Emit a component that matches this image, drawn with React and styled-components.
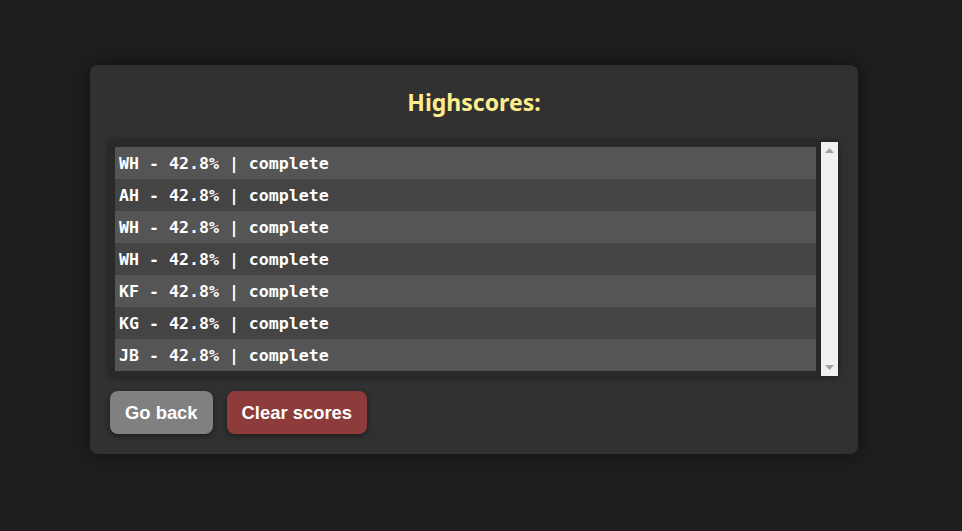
import React from 'react';
import styled, { createGlobalStyle } from 'styled-components';

const GlobalStyle = createGlobalStyle`
  html, body {
    margin: 0;
    padding: 0;
    background: #1f1f1f;
  }
  body {
    font-family: "Liberation Sans", Arial, sans-serif;
  }
`;

const Page = styled.div`
  width: 962px;
  height: 531px;
  padding: 65px 0 0 90px;
  box-sizing: border-box;
  display: flex;
  align-items: flex-start;
`;

const Card = styled.div`
  width: 768px;
  height: 389px;
  box-sizing: border-box;
  padding: 20px 20px 0 20px;
  background: #313131;
  border-radius: 8px;
  box-shadow: 0 0 24px rgba(0, 0, 0, 0.55);
  display: flex;
  flex-direction: column;
`;

const Title = styled.h2`
  margin: 0 0 23px 0;
  height: 34px;
  line-height: 34px;
  text-align: center;
  font-family: "Comic Sans MS", "Noto Sans", sans-serif;
  font-size: 23px;
  font-weight: 700;
  color: #ffee8c;
`;

const ListBox = styled.div`
  display: flex;
  height: 234px;
  background: #292929;
  padding-left: 5px;
  box-shadow: 0 0 8px rgba(0, 0, 0, 0.45);
`;

const Rows = styled.ul`
  list-style: none;
  margin: 5px 5px 5px 0;
  padding: 0;
  flex: 1;
`;

const Row = styled.li`
  height: 32px;
  box-sizing: border-box;
  padding: 2px 0 0 4px;
  line-height: 30px;
  background: ${p => (p.$odd ? '#444444' : '#555555')};
  color: #ffffff;
  font-family: "DejaVu Sans Mono", "Liberation Mono", monospace;
  font-weight: 700;
  font-size: 16.6px;
  white-space: pre;
`;

const Scrollbar = styled.div`
  width: 17px;
  background: #f1f1f1;
  display: flex;
  flex-direction: column;
  justify-content: space-between;
  align-items: center;
  padding: 6px 0;
  box-sizing: border-box;
`;

const Buttons = styled.div`
  display: flex;
  gap: 14px;
  margin-top: 15px;
`;

const Button = styled.button`
  height: 43px;
  padding: 1px 15px 0 15px;
  border: none;
  border-radius: 8px;
  background: ${p => (p.$danger ? '#8d3b3b' : '#808080')};
  color: #ffffff;
  font-family: "Liberation Sans", Arial, sans-serif;
  font-weight: 700;
  font-size: 18.4px;
  box-shadow: 0 2px 6px rgba(0, 0, 0, 0.45);
  cursor: pointer;
`;

const Arrow = ({ down }) => (
  <svg width="9" height="5" viewBox="0 0 9 5">
    <path d={down ? 'M0 0 H9 L4.5 5 Z' : 'M0 5 H9 L4.5 0 Z'} fill="#a3a3a3" />
  </svg>
);

const scores = [
  { name: 'WH', pct: '42.8%', status: 'complete' },
  { name: 'AH', pct: '42.8%', status: 'complete' },
  { name: 'WH', pct: '42.8%', status: 'complete' },
  { name: 'WH', pct: '42.8%', status: 'complete' },
  { name: 'KF', pct: '42.8%', status: 'complete' },
  { name: 'KG', pct: '42.8%', status: 'complete' },
  { name: 'JB', pct: '42.8%', status: 'complete' },
];

const App = () => {
  return (
    <>
      <GlobalStyle />
      <Page>
        <Card>
          <Title>Highscores:</Title>
          <ListBox>
            <Rows>
              {scores.map((s, i) => (
                <Row key={i} $odd={i % 2 === 1}>
                  {`${s.name} - ${s.pct} | ${s.status}`}
                </Row>
              ))}
            </Rows>
            <Scrollbar>
              <Arrow />
              <Arrow down />
            </Scrollbar>
          </ListBox>
          <Buttons>
            <Button>Go back</Button>
            <Button $danger>Clear scores</Button>
          </Buttons>
        </Card>
      </Page>
    </>
  );
};

export default App;
